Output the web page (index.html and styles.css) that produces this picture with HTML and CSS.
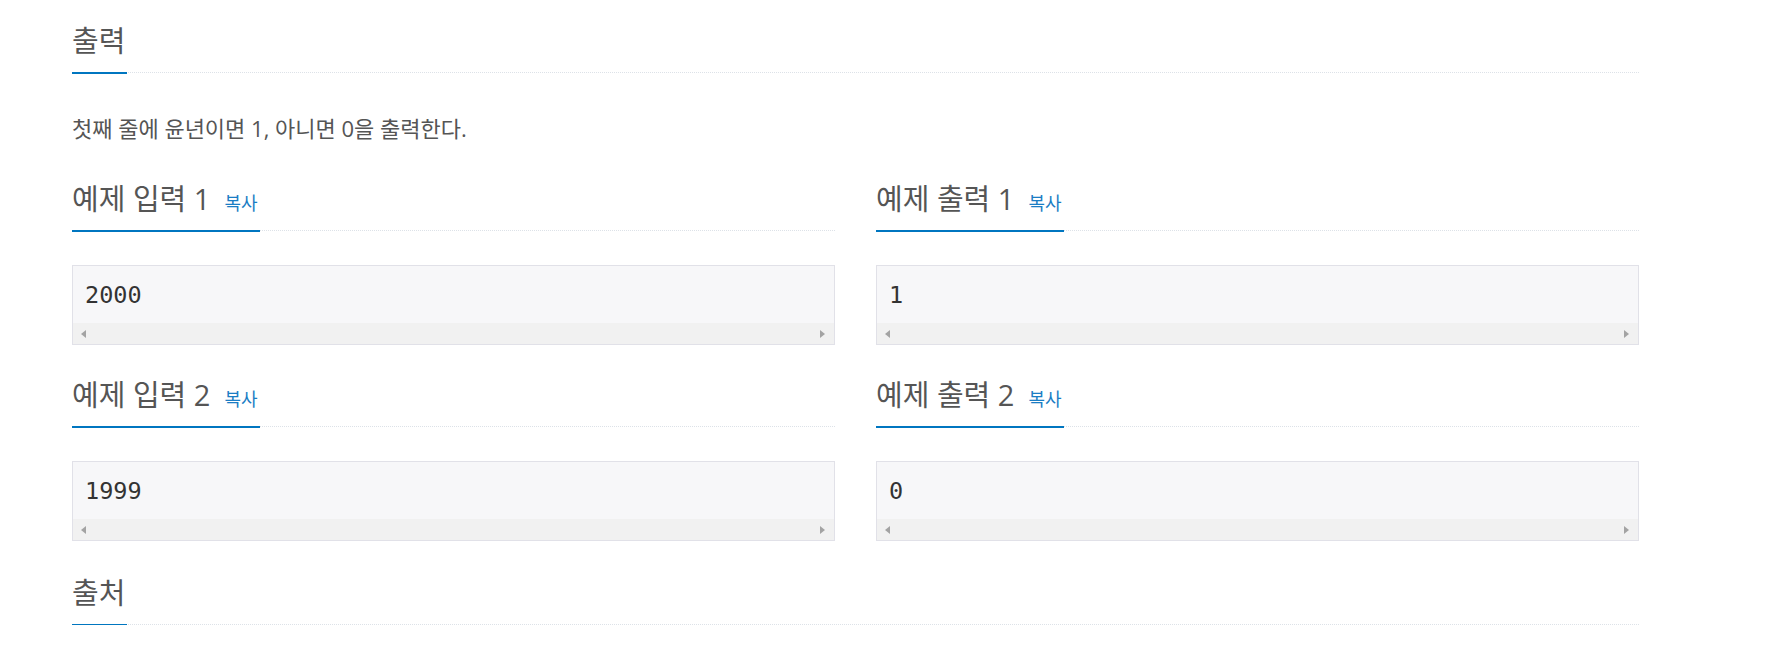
FILE: index.html
```html
<!DOCTYPE html>
<html lang="ko">
<head>
    <meta charset="UTF-8">
    <meta name="viewport" content="width=device-width, initial-scale=1.0">
    <title>윤년</title>
    <link rel="stylesheet" href="styles.css">
</head>
<body>
    <div class="container">
        <section class="problem-section">
            <div class="headline"><h2>출력</h2></div>
            <p class="problem-text">첫째 줄에 윤년이면 1, 아니면 0을 출력한다.</p>
        </section>

        <div class="sample-grid">
            <section class="sample">
                <div class="headline"><h2>예제 입력 1<span class="copy-button">복사</span></h2></div>
                <div class="sample-box">
                    <pre class="sampledata">2000</pre>
                    <div class="scrollbar"><span class="arrow-left"></span><span class="arrow-right"></span></div>
                </div>
            </section>
            <section class="sample">
                <div class="headline"><h2>예제 출력 1<span class="copy-button">복사</span></h2></div>
                <div class="sample-box">
                    <pre class="sampledata">1</pre>
                    <div class="scrollbar"><span class="arrow-left"></span><span class="arrow-right"></span></div>
                </div>
            </section>
            <section class="sample">
                <div class="headline"><h2>예제 입력 2<span class="copy-button">복사</span></h2></div>
                <div class="sample-box">
                    <pre class="sampledata">1999</pre>
                    <div class="scrollbar"><span class="arrow-left"></span><span class="arrow-right"></span></div>
                </div>
            </section>
            <section class="sample">
                <div class="headline"><h2>예제 출력 2<span class="copy-button">복사</span></h2></div>
                <div class="sample-box">
                    <pre class="sampledata">0</pre>
                    <div class="scrollbar"><span class="arrow-left"></span><span class="arrow-right"></span></div>
                </div>
            </section>
        </div>

        <section class="problem-section source">
            <div class="headline"><h2>출처</h2></div>
        </section>
    </div>
</body>
</html>
```

FILE: styles.css
```css
body {
    margin: 0;
    font-family: "Open Sans", "Noto Sans CJK KR", sans-serif;
    color: #555;
    background-color: #fff;
}
.container {
    width: 1567px;
    padding: 26px 0 0 72px;
}
.headline {
    border-bottom: 1px dotted #dde2e8;
}
.headline h2 {
    display: inline-block;
    margin: 0 0 -2px;
    padding: 0 2px 16px 0;
    border-bottom: 2px solid #0076c0;
    font-size: 29px;
    font-weight: 400;
    line-height: 30px;
}
.copy-button {
    margin-left: 14px;
    font-size: 18px;
    line-height: 18px;
    color: #1a7dc4;
}
.problem-text {
    margin: 36px 0 37px;
    font-size: 22px;
    line-height: 38px;
}
.sample-grid {
    display: grid;
    grid-template-columns: 763px 763px;
    column-gap: 41px;
}
.sample .headline {
    margin-bottom: 34px;
}
.sample-box {
    margin-bottom: 35px;
    border: 1px solid #e1e1e8;
    background-color: #f7f7f9;
}
.sampledata {
    margin: 0;
    padding: 13px 12px 11px;
    font-family: "DejaVu Sans Mono", monospace;
    font-size: 23.5px;
    line-height: 33px;
    color: #333;
}
.scrollbar {
    height: 21px;
    padding: 0 9px 0 8px;
    display: flex;
    justify-content: space-between;
    align-items: center;
    background-color: #f1f1f1;
}
.arrow-left,
.arrow-right {
    width: 0;
    height: 0;
    border-top: 4px solid transparent;
    border-bottom: 4px solid transparent;
}
.arrow-left {
    border-right: 5px solid #a3a3a3;
}
.arrow-right {
    border-left: 5px solid #a3a3a3;
}
.source {
    margin-top: 2px;
}
```
